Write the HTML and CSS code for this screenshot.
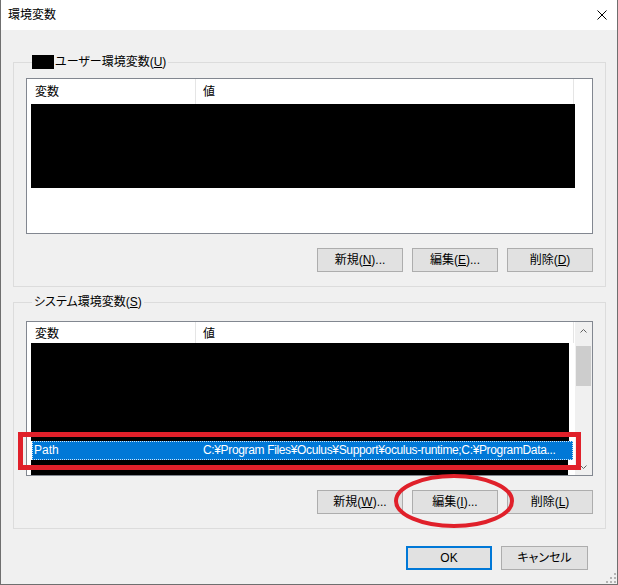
FILE: index.html
```html
<!DOCTYPE html>
<html lang="ja">
<head>
<meta charset="utf-8">
<title>環境変数</title>
<link rel="stylesheet" href="styles.css">
</head>
<body>
<div class="window">
  <div class="titlebar">
    <span class="title">環境変数</span>
    <svg class="close" width="10" height="10" viewBox="0 0 10 10"><path d="M0.5 0.5 L9.5 9.5 M9.5 0.5 L0.5 9.5" stroke="#000" stroke-width="1" fill="none"/></svg>
  </div>
  <div class="content">
    <div class="group group-user">
      <div class="group-label"><span class="redact"></span>ユーザー環境変数(<u>U</u>)</div>
      <div class="list list-user">
        <div class="list-main">
          <div class="list-header hdr-tall">
            <div class="col col1">変数</div>
            <div class="col col2">値</div>
          </div>
          <div class="black black-user"></div>
        </div>
      </div>
      <div class="btn-row">
        <button class="btn">新規(<u>N</u>)...</button>
        <button class="btn">編集(<u>E</u>)...</button>
        <button class="btn">削除(<u>D</u>)</button>
      </div>
    </div>
    <div class="group group-sys">
      <div class="group-label">システム環境変数(<u>S</u>)</div>
      <div class="list list-sys">
        <div class="list-main">
          <div class="list-header hdr-short">
            <div class="col col1">変数</div>
            <div class="col col2">値</div>
          </div>
          <div class="black black-a"></div>
          <div class="row-selected">
            <div class="cell cell1">Path</div>
            <div class="cell cell2">C:¥Program Files¥Oculus¥Support¥oculus-runtime;C:¥ProgramData...</div>
          </div>
          <div class="black black-b"></div>
        </div>
        <div class="scrollbar">
          <div class="sb-btn"><svg width="7" height="4" viewBox="0 0 7 4"><path d="M0.5 3.5 L3.5 0.5 L6.5 3.5" stroke="#606060" fill="none"/></svg></div>
          <div class="sb-track"><div class="sb-thumb"></div></div>
          <div class="sb-btn"><svg width="7" height="4" viewBox="0 0 7 4"><path d="M0.5 0.5 L3.5 3.5 L6.5 0.5" stroke="#606060" fill="none"/></svg></div>
        </div>
      </div>
      <div class="btn-row">
        <button class="btn">新規(<u>W</u>)...</button>
        <button class="btn">編集(<u>I</u>)...</button>
        <button class="btn">削除(<u>L</u>)</button>
      </div>
    </div>
    <div class="footer">
      <button class="btn btn-default">OK</button>
      <button class="btn btn-cancel">キャンセル</button>
    </div>
  </div>
  <div class="mark-rect"></div>
  <svg class="mark-ellipse" width="124" height="58" viewBox="0 0 124 58"><ellipse cx="62" cy="29" rx="58" ry="25" stroke="#e0202a" stroke-width="4" fill="none"/></svg>
  <svg class="grip" width="10" height="10" viewBox="0 0 10 10">
    <rect x="8" y="0" width="2" height="2" fill="#b4b4b4"/>
    <rect x="4" y="4" width="2" height="2" fill="#b4b4b4"/>
    <rect x="8" y="4" width="2" height="2" fill="#b4b4b4"/>
    <rect x="0" y="8" width="2" height="2" fill="#b4b4b4"/>
    <rect x="4" y="8" width="2" height="2" fill="#b4b4b4"/>
    <rect x="8" y="8" width="2" height="2" fill="#b4b4b4"/>
  </svg>
</div>
</body>
</html>
```

FILE: styles.css
```css
* { box-sizing: border-box; }
html, body { margin: 0; padding: 0; }
body {
  font-family: "Liberation Sans", "Noto Sans CJK JP", sans-serif;
  font-size: 12px;
  color: #000;
  font-feature-settings: "palt";
}
.window {
  position: relative;
  width: 618px;
  height: 585px;
  background: #f0f0f0;
  border-left: 1px solid #6f6f6f;
  border-right: 1px solid #6f6f6f;
  border-bottom: 1px solid #6f6f6f;
  overflow: hidden;
}
.titlebar {
  height: 30px;
  background: #fff;
  display: flex;
  align-items: center;
}
.title {
  padding-left: 7px;
  font-size: 12px;
  line-height: 16px;
}
.close {
  margin-left: auto;
  margin-right: 10px;
  display: block;
}
.content {
  padding: 32px 11px 0 12px;
}
.group {
  border: 1px solid #dcdcdc;
  padding: 0 12px 14px 12px;
}
.group-sys { margin-top: 15px; }
.group-label {
  display: flex;
  align-items: center;
  width: max-content;
  margin: -9px 0 0 6px;
  padding: 0 2px;
  height: 16px;
  line-height: 16px;
  background: #f0f0f0;
}
.redact {
  display: inline-block;
  width: 22px;
  height: 14px;
  background: #000;
  margin-left: -2px;
  margin-right: 1px;
}
u { text-decoration: underline; text-underline-offset: 1px; }
.list {
  background: #fff;
  border: 1px solid #828790;
  display: flex;
  overflow: hidden;
}
.list-user { margin-top: 8px; height: 156px; }
.list-sys { margin-top: 11px; height: 155px; }
.list-main {
  width: 548px;
  overflow: hidden;
}
.list-header {
  display: flex;
}
.hdr-tall { height: 25px; }
.hdr-tall .col { padding-top: 2px; line-height: 23px; }
.hdr-short { height: 21px; }
.hdr-short .col { padding-top: 3px; line-height: 18px; }
.col {
  border-right: 1px solid #e5e5e5;
  white-space: nowrap;
}
.col1 { width: 169px; padding-left: 8px; }
.col2 { width: 378px; padding-left: 7px; }
.black { background: #000; }
.black-user { margin-left: 4px; width: 547px; height: 84px; }
.black-a { margin-left: 4px; width: 538px; height: 98px; }
.black-b { margin-left: 4px; width: 537px; height: 15px; }
.row-selected {
  margin-left: 5px;
  width: 541px;
  height: 19px;
  background: #0078d7;
  border: 1px dotted #cfe3f5;
  color: #fff;
  display: flex;
  line-height: 17px;
  white-space: nowrap;
}
.cell { overflow: hidden; }
.cell1 { width: 163px; padding-left: 1px; }
.cell2 { flex: 1; padding-left: 7px; letter-spacing: -0.35px; }
.scrollbar {
  width: 17px;
  margin-left: auto;
  background: #f0f0f0;
  display: flex;
  flex-direction: column;
}
.sb-btn {
  height: 17px;
  display: flex;
  align-items: center;
  justify-content: center;
}
.sb-btn svg { display: block; }
.sb-track { flex: 1; }
.sb-thumb {
  margin: 7px 1px 0 1px;
  height: 40px;
  background: #cdcdcd;
}
.btn-row {
  display: flex;
  justify-content: flex-end;
  gap: 9px;
  margin-top: 14px;
}
.btn {
  width: 86px;
  height: 24px;
  margin: 0;
  padding: 0;
  background: #e1e1e1;
  border: 1px solid #adadad;
  font: inherit;
  color: #000;
  line-height: 20px;
}
.footer {
  display: flex;
  justify-content: flex-end;
  gap: 9px;
  margin-top: 17px;
  padding-right: 18px;
}
.btn-default { border: 2px solid #0078d7; }
.btn-cancel { width: 87px; }
.mark-rect {
  position: absolute;
  left: 17px;
  top: 432px;
  width: 563px;
  height: 38px;
  border: 5px solid #e0202a;
}
.mark-ellipse {
  position: absolute;
  left: 391px;
  top: 472px;
}
.grip {
  position: absolute;
  right: 1px;
  bottom: 1px;
}
```
